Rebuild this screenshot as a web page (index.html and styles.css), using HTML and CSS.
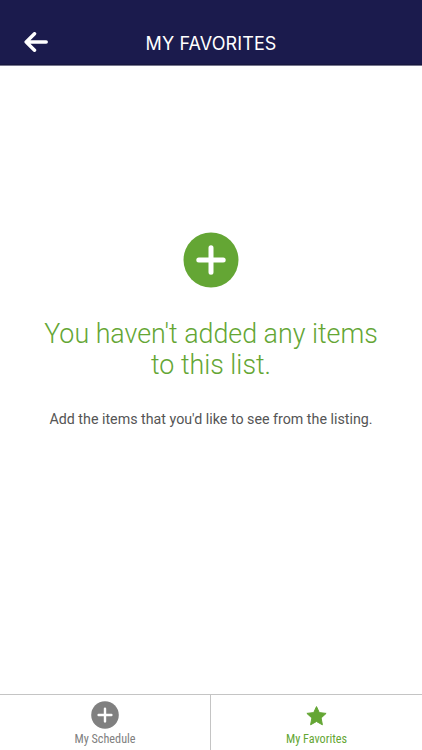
FILE: index.html
```html
<!DOCTYPE html>
<html lang="en">
<head>
    <meta charset="UTF-8">
    <meta name="viewport" content="width=device-width, initial-scale=1.0">
    <title>My Favorites</title>
    <link rel="stylesheet" href="styles.css">
</head>
<body>
    <header class="header">
        <button class="back-button" aria-label="Back">
            <svg width="24" height="20" viewBox="0 0 24 20">
                <path d="M22.2 10H2.2M10.5 1.8L2.2 10l8.3 8.2"/>
            </svg>
        </button>
        <h1>MY FAVORITES</h1>
    </header>

    <main class="empty-list">
        <svg class="add-icon" width="56" height="56" viewBox="0 0 56 56">
            <circle cx="28" cy="28" r="27.5"/>
            <path d="M28 15.8v24.4M15.8 28h24.4"/>
        </svg>
        <h2>You haven't added any items<br>to this list.</h2>
        <p>Add the items that you'd like to see from the listing.</p>
    </main>

    <nav class="tabs">
        <a class="tab">
            <svg class="tab-icon" width="28" height="28" viewBox="0 0 28 28">
                <circle cx="14" cy="14" r="13.8"/>
                <path d="M14 7.6v12.8M7.6 14h12.8"/>
            </svg>
            <span class="tab-label">My Schedule</span>
        </a>
        <a class="tab active">
            <svg class="tab-icon" width="28" height="28" viewBox="0 0 28 28">
                <polygon points="13.5,5.6 16.3,11.6 23.1,12.4 18.1,17 19.4,23.8 13.5,20.5 7.6,23.8 8.9,17 3.9,12.4 10.7,11.6"/>
            </svg>
            <span class="tab-label">My Favorites</span>
        </a>
    </nav>
</body>
</html>
```

FILE: styles.css
```css
body {
    margin: 0;
    height: 750px;
    display: flex;
    flex-direction: column;
    overflow: hidden;
    font-family: Roboto, sans-serif;
    background-color: #fff;
}

.header {
    display: grid;
    grid-template-columns: 72px 1fr 72px;
    align-items: center;
    height: 65px;
    padding-top: 20px;
    box-sizing: border-box;
    background-color: #1b1b4d;
    border-bottom: 1px solid #17173f;
    box-shadow: 0 1px 0 #77778f;
    color: #fff;
}

.back-button {
    display: flex;
    justify-content: center;
    padding: 0;
    background: none;
    border: none;
    cursor: pointer;
}

.back-button path {
    fill: none;
    stroke: #fff;
    stroke-width: 3.5;
    stroke-linecap: round;
    stroke-linejoin: round;
}

.header h1 {
    margin: 4px 0 0;
    font-family: Inter, sans-serif;
    font-size: 18px;
    font-weight: 400;
    line-height: 22px;
    letter-spacing: 0.1px;
    text-align: center;
    white-space: nowrap;
}

.empty-list {
    flex: 1;
    display: flex;
    flex-direction: column;
    align-items: center;
    padding-top: 167px;
    text-align: center;
}

.add-icon {
    margin-top: -0.5px;
}

.add-icon circle {
    fill: #64a634;
}

.add-icon path {
    stroke: #fff;
    stroke-width: 5;
    stroke-linecap: round;
}

.empty-list h2 {
    margin: 31.5px 0 0;
    font-size: 26.8px;
    font-weight: 300;
    line-height: 31px;
    color: #64a634;
    white-space: nowrap;
}

.empty-list p {
    margin: 28px 0 0;
    font-size: 14.25px;
    line-height: 20px;
    color: #555;
    white-space: nowrap;
}

.tabs {
    display: grid;
    grid-template-columns: 210px 1fr;
    height: 56px;
    box-sizing: border-box;
    border-top: 1px solid #c4c4c4;
}

.tab {
    display: flex;
    flex-direction: column;
    align-items: center;
    padding-top: 6px;
    color: #808080;
}

.tab + .tab {
    border-left: 1px solid #c4c4c4;
}

.tab.active {
    color: #64a634;
}

.tab-icon {
    fill: currentColor;
}

.tab-icon path {
    stroke: #fff;
    stroke-width: 2.4;
    stroke-linecap: round;
}

.tab-icon polygon {
    stroke: currentColor;
    stroke-width: 1;
    stroke-linejoin: round;
}

.tab-label {
    margin-top: 3px;
    font-size: 12.2px;
    font-stretch: 75%;
    line-height: 15px;
}
```
